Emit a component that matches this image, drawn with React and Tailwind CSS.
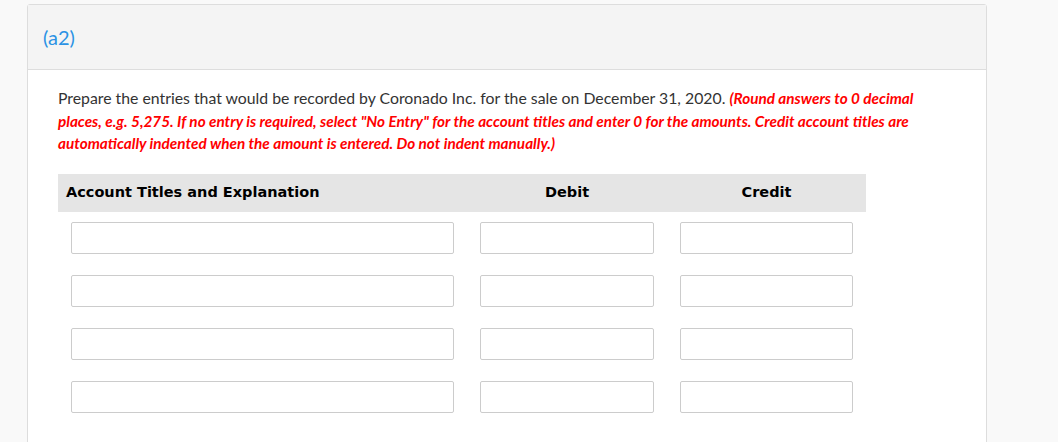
export default function App() {
  const rows = [0, 1, 2, 3];
  return (
    <div className="min-h-screen bg-[#f9f9f9] pt-1 pl-[27px] pr-[71px] font-['Lato',_sans-serif]">
      <div className="bg-white border border-[#dddddd] rounded-t-[3px] min-h-[460px]">
        {/* header */}
        <div className="h-[65px] bg-[#f4f4f4] border-b border-[#dddddd] flex items-center px-[15px]">
          <span className="text-[20px] text-[#2b92e4]">(a2)</span>
        </div>
        {/* body */}
        <div className="pl-[30px] pr-[50px] pt-[17px]">
          <p className="text-[15.8px] leading-[21.5px] text-[#333333]">
            Prepare the entries that would be recorded by Coronado Inc. for the sale on December 31, 2020.{" "}
            <span className="text-[#ff0000] text-[15.3px] font-bold italic">
              (Round answers to 0 decimal places, e.g. 5,275. If no entry is required, select "No Entry" for the
              account titles and enter 0 for the amounts. Credit account titles are automatically indented when
              the amount is entered. Do not indent manually.)
            </span>
          </p>

          <table className="mt-[19px] w-[808px] border-collapse font-['DejaVu_Sans',_sans-serif]">
            <thead>
              <tr className="bg-[#e5e5e5] h-[38px] text-[14.5px] font-bold text-black">
                <th className="w-[409px] text-left pl-[8px]">Account Titles and Explanation</th>
                <th className="w-[200px] text-center">Debit</th>
                <th className="w-[199px] text-center">Credit</th>
              </tr>
            </thead>
            <tbody>
              {rows.map((r) => (
                <tr key={r} className="h-[53px]">
                  <td className="px-[13px] pt-[10px] pb-[11px]">
                    <input type="text" className="block w-full h-[32px] border border-[#cccccc] rounded-[2px] bg-white" />
                  </td>
                  <td className="px-[13px] pt-[10px] pb-[11px]">
                    <input type="text" className="block w-full h-[32px] border border-[#cccccc] rounded-[2px] bg-white" />
                  </td>
                  <td className="px-[13px] pt-[10px] pb-[11px]">
                    <input type="text" className="block w-full h-[32px] border border-[#cccccc] rounded-[2px] bg-white" />
                  </td>
                </tr>
              ))}
            </tbody>
          </table>
        </div>
      </div>
    </div>
  );
}
